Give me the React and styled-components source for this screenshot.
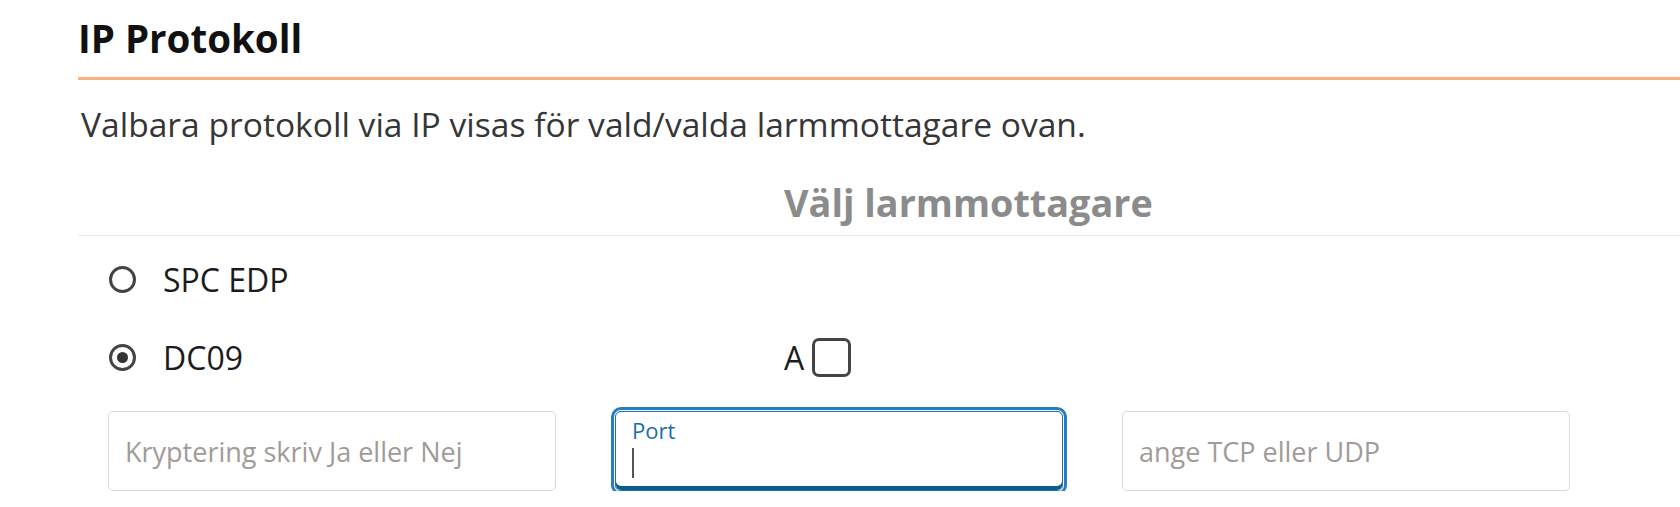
import React from 'react'
import styled, { createGlobalStyle } from 'styled-components'

const GlobalStyle = createGlobalStyle`
body{
    margin: 0;
    background: #fff;
    font-family: "Open Sans", "Noto Sans", sans-serif;
}
`

const Page = styled.div`
padding-top: 15px;
padding-left: 78px;
`

const Title = styled.h1`
margin: 0;
font-size: 38.5px;
line-height: 46px;
font-weight: 700;
color: #111;
padding-bottom: 16px;
border-bottom: 3px solid #fbb07f;
`

const Intro = styled.p`
margin: 22px 0 0;
padding-left: 3px;
font-size: 33.6px;
line-height: 45px;
color: #363636;
`

const HeadRow = styled.div`
display: grid;
grid-template-columns: 706px 1fr;
margin-top: 34px;
padding-bottom: 10px;
border-bottom: 1px solid #e8e8e8;
h2{
    grid-column: 2;
    margin: 0;
    font-size: 37.8px;
    line-height: 44px;
    font-weight: 700;
    color: #8b8b8b;
}
`

const Options = styled.div`
padding: 17px 0 0 31px;
display: flex;
flex-direction: column;
gap: 26px;
`

const OptionRow = styled.div`
display: grid;
grid-template-columns: 675px 1fr;
height: 52px;
align-items: center;
`

const RadioLabel = styled.label`
display: flex;
align-items: center;
gap: 27px;
font-size: 32px;
color: #1c1c1c;
`

const Radio = styled.span`
width: 27px;
height: 27px;
box-sizing: border-box;
border: 3.5px solid #444;
border-radius: 50%;
display: flex;
align-items: center;
justify-content: center;
&::after{
    content: "";
    width: 11px;
    height: 11px;
    border-radius: 50%;
    background: ${p => p.checked ? '#333' : 'transparent'};
}
`

const CheckLabel = styled.label`
display: flex;
align-items: center;
gap: 8px;
font-size: 32px;
color: #1c1c1c;
`

const Checkbox = styled.span`
width: 39px;
height: 39px;
box-sizing: border-box;
border: 3px solid #444;
border-radius: 7px;
`

const InputRow = styled.div`
display: flex;
gap: 59px;
margin-top: 28px;
padding-left: 30px;
`

const Field = styled.input`
width: 448px;
height: 80px;
box-sizing: border-box;
border: 1px solid #d9d9d9;
border-radius: 5px;
padding: 0 16px;
font-family: "Open Sans", sans-serif;
font-size: 27px;
color: #333;
outline: none;
&::placeholder{
    color: #a19b98;
}
`

const FocusField = styled.div`
width: 448px;
height: 80px;
box-sizing: border-box;
border: 1px solid #1e6fae;
border-radius: 6px;
padding: 5px 16px 0;
box-shadow: 0 0 0 1px #fff, 0 0 0 4px #2a7cc2, inset 0 -4px 0 #0e5c8d;
span{
    display: block;
    font-size: 22px;
    line-height: 26px;
    color: #1b6ea8;
}
i{
    display: block;
    margin-top: 5px;
    width: 2px;
    height: 30px;
    background: #555;
}
`

const App = () => {
    return (
        <Page>
            <GlobalStyle />
            <Title>IP Protokoll</Title>
            <Intro>Valbara protokoll via IP visas för vald/valda larmmottagare ovan.</Intro>
            <HeadRow>
                <h2>Välj larmmottagare</h2>
            </HeadRow>
            <Options>
                <OptionRow>
                    <RadioLabel><Radio />SPC EDP</RadioLabel>
                </OptionRow>
                <OptionRow>
                    <RadioLabel><Radio checked />DC09</RadioLabel>
                    <CheckLabel>A<Checkbox /></CheckLabel>
                </OptionRow>
            </Options>
            <InputRow>
                <Field placeholder="Kryptering skriv Ja eller Nej" readOnly />
                <FocusField>
                    <span>Port</span>
                    <i />
                </FocusField>
                <Field placeholder="ange TCP eller UDP" readOnly />
            </InputRow>
        </Page>
    )
}

export default App
